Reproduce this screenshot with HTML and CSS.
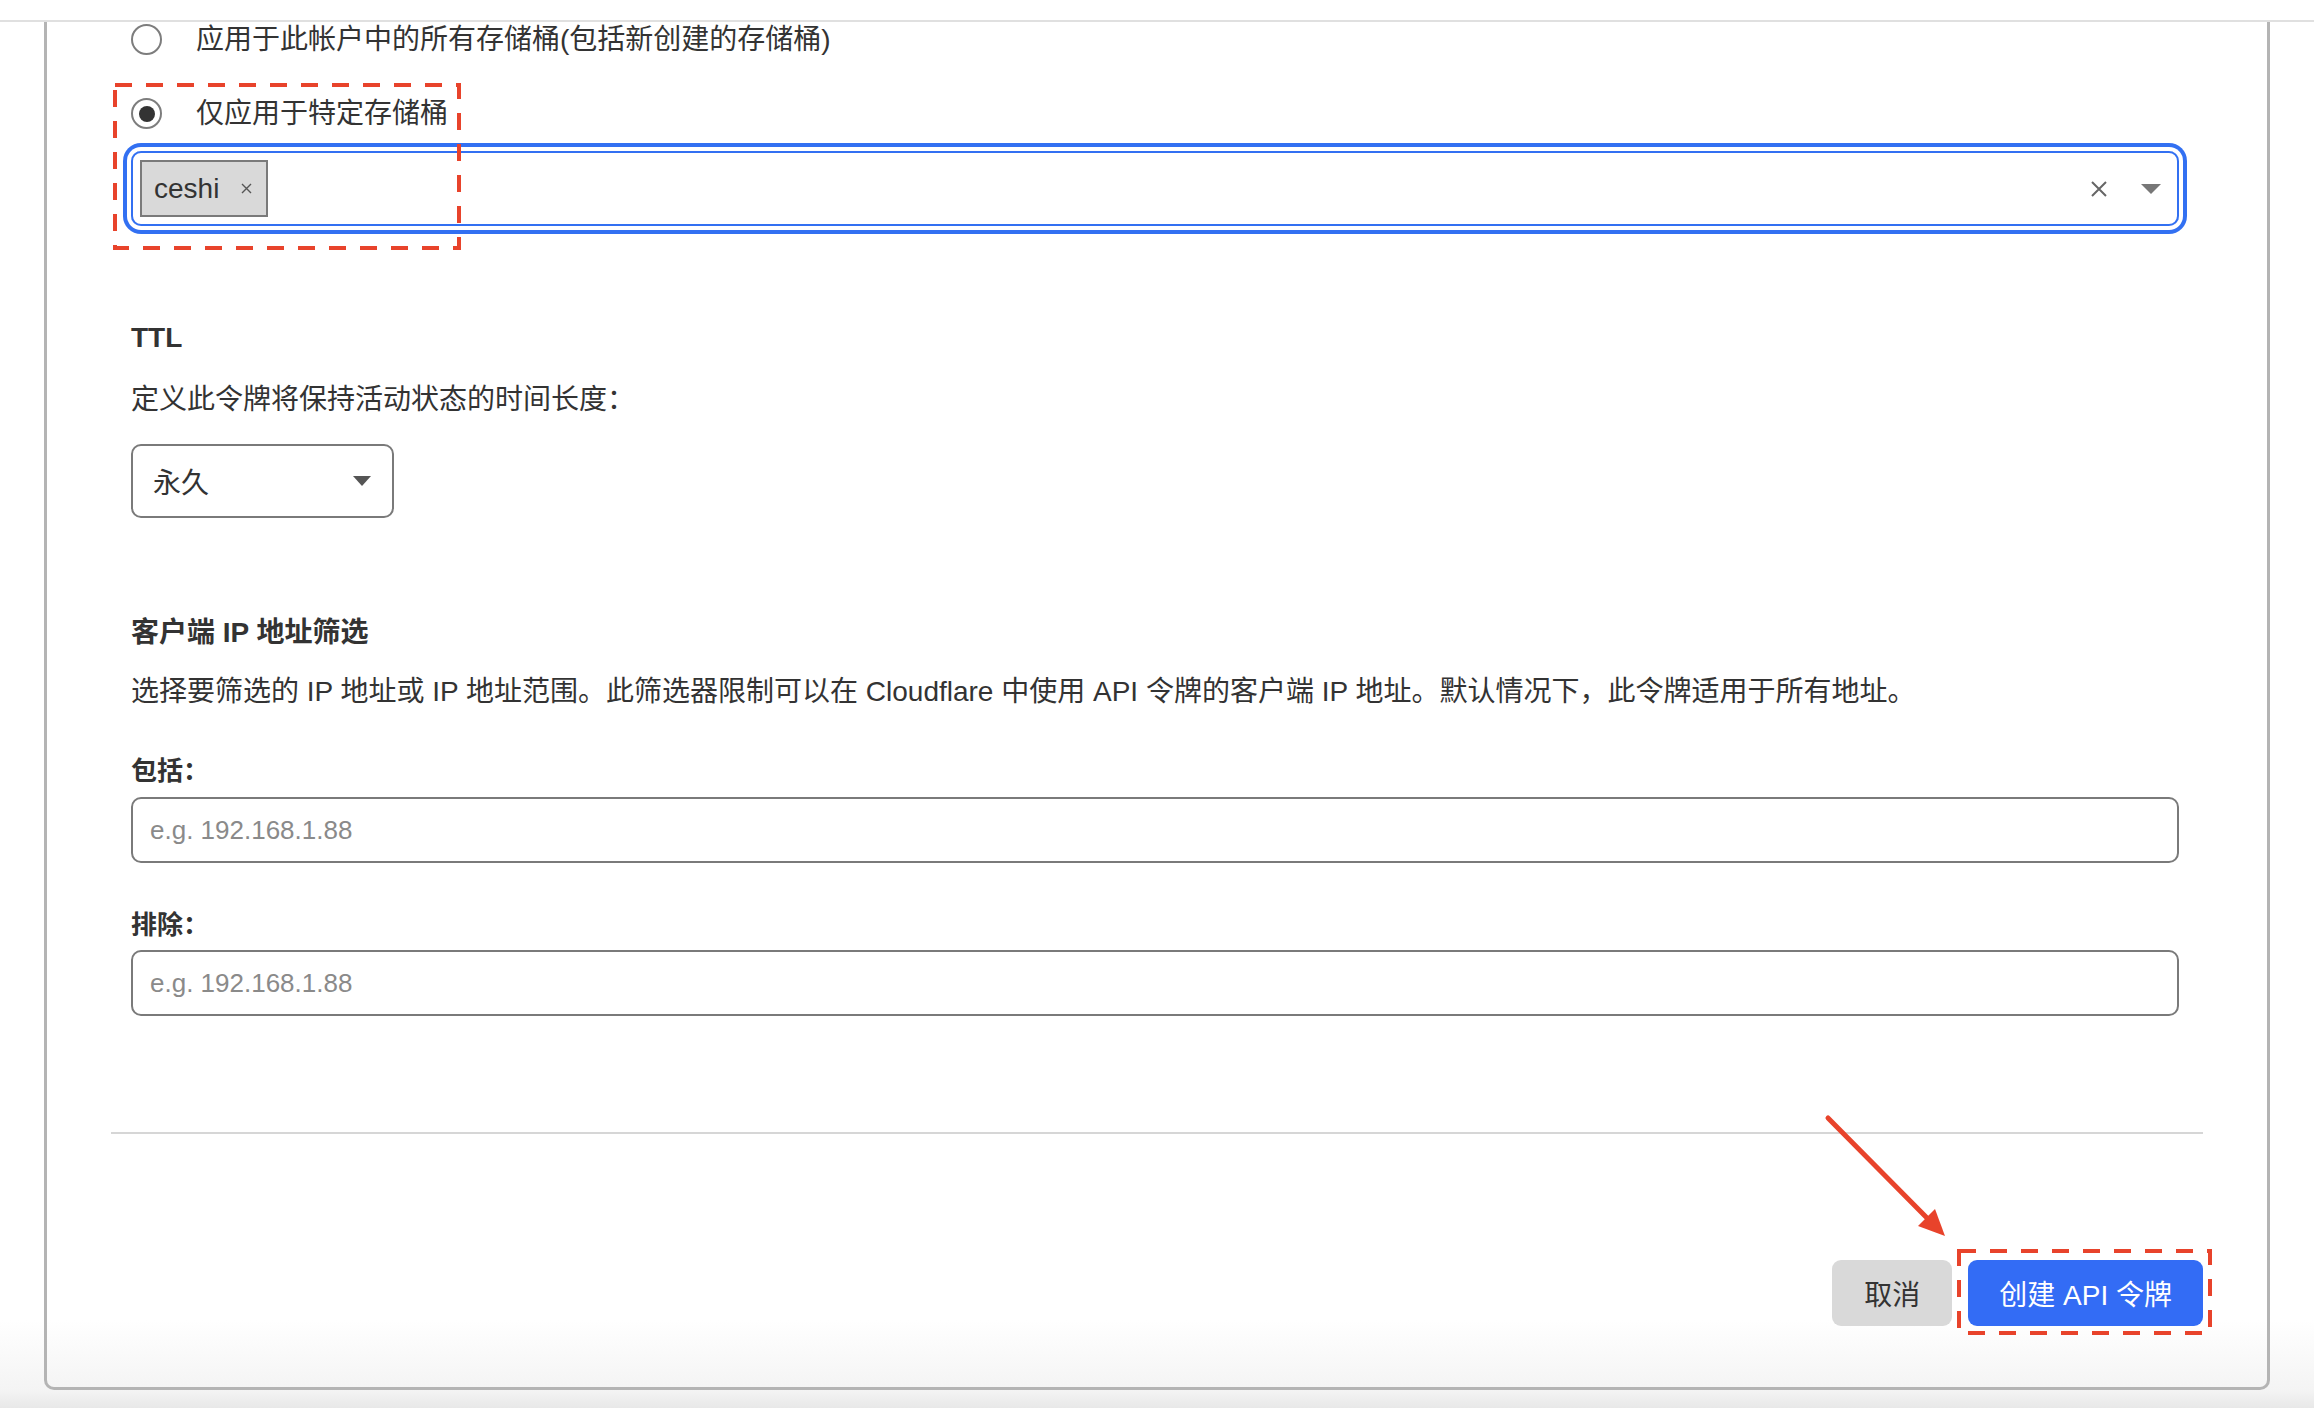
FILE: index.html
```html
<!DOCTYPE html>
<html lang="zh-CN">
<head>
    <meta charset="utf-8">
    <title>创建 API 令牌</title>
    <link rel="stylesheet" href="styles.css">
</head>
<body>
    <div class="topbar"></div>
    <div class="card">
        <div class="form">
            <label class="radio-row">
                <span class="radio"></span>
                <span>应用于此帐户中的所有存储桶(包括新创建的存储桶)</span>
            </label>
            <label class="radio-row radio-second">
                <span class="radio checked"></span>
                <span>仅应用于特定存储桶</span>
            </label>
            <div class="multi-select">
                <span class="tag">ceshi
                    <svg class="tag-x" width="11" height="11" viewBox="0 0 11 11"><path d="M1 1L10 10M10 1L1 10" stroke="#555" stroke-width="1.4"/></svg>
                </span>
                <span class="spacer"></span>
                <svg class="clear-icon" width="16" height="16" viewBox="0 0 16 16"><path d="M1 1L15 15M15 1L1 15" stroke="#666" stroke-width="2"/></svg>
                <svg class="caret" width="20" height="10" viewBox="0 0 20 10"><path d="M0 0H20L10 10Z" fill="#777"/></svg>
            </div>

            <h3 class="section-title">TTL</h3>
            <p class="section-desc">定义此令牌将保持活动状态的时间长度：</p>
            <div class="select-box">
                <span>永久</span>
                <svg width="18" height="10" viewBox="0 0 18 10"><path d="M0 0H18L9 10Z" fill="#555"/></svg>
            </div>

            <h3 class="section-title title-ip">客户端 IP 地址筛选</h3>
            <p class="section-desc desc-ip">选择要筛选的 IP 地址或 IP 地址范围。此筛选器限制可以在 Cloudflare 中使用 API 令牌的客户端 IP 地址。默认情况下，此令牌适用于所有地址。</p>
            <label class="field-label">包括：</label>
            <input class="text-input" type="text" placeholder="e.g. 192.168.1.88">
            <label class="field-label label-exclude">排除：</label>
            <input class="text-input input-exclude" type="text" placeholder="e.g. 192.168.1.88">
        </div>

        <div class="footer">
            <hr class="divider">
            <div class="actions">
                <button class="btn btn-cancel">取消</button>
                <span class="btn-wrap">
                    <button class="btn btn-primary">创建 API 令牌</button>
                    <svg class="mark mark-btn" width="255" height="86" viewBox="0 0 255 86"><rect x="2" y="2" width="251" height="82" fill="none" stroke="#e8432b" stroke-width="4" stroke-dasharray="17 14"/></svg>
                </span>
            </div>
        </div>

        <!-- annotations -->
        <svg class="mark mark-scope" width="348" height="167" viewBox="0 0 348 167"><rect x="2" y="2" width="344" height="163" fill="none" stroke="#e8432b" stroke-width="4" stroke-dasharray="17 14"/></svg>
        <svg class="mark arrow" width="130" height="130" viewBox="0 0 130 130">
            <path d="M5 5L106 107" stroke="#e8432b" stroke-width="5" stroke-linecap="round"/>
            <path d="M122 123L95 113L112 96Z" fill="#e8432b"/>
        </svg>
    </div>
</body>
</html>
```

FILE: styles.css
```css
* {
    box-sizing: border-box;
}
html, body {
    margin: 0;
}
body {
    height: 1408px;
    overflow: hidden;
    font-family: "Liberation Sans", "Noto Sans CJK SC", sans-serif;
    font-size: 28px;
    color: #333;
    background: linear-gradient(to bottom, #fff 1320px, #f4f4f4 1390px, #e8e8e8 1408px);
}
.topbar {
    height: 22px;
    border-bottom: 2px solid #e0e0e0;
}
.card {
    position: relative;
    margin: 0 44px;
    border: 3px solid #b4b4b4;
    border-top: none;
    border-radius: 0 0 10px 10px;
}
.form {
    padding: 0 88px 0 84px;
}

/* scope radios */
.radio-row {
    display: flex;
    align-items: center;
    gap: 34px;
    height: 35px;
    line-height: 40px;
}
.radio-second {
    margin-top: 39px;
}
.radio {
    flex: none;
    display: flex;
    align-items: center;
    justify-content: center;
    width: 31px;
    height: 31px;
    border: 2px solid #7d7d7d;
    border-radius: 50%;
}
.radio.checked::after {
    content: "";
    width: 16px;
    height: 16px;
    border-radius: 50%;
    background: #333;
}
.multi-select {
    display: flex;
    align-items: center;
    height: 75px;
    margin-top: 20px;
    padding: 0 16px 0 7px;
    border: 2px solid #3270f2;
    border-radius: 10px;
    box-shadow: 0 0 0 4px #fff, 0 0 0 8px #3270f2;
}
.tag {
    display: flex;
    align-items: center;
    gap: 22px;
    height: 57px;
    padding: 0 14px 0 12px;
    border: 2px solid #7a7a7a;
    background: #d9d9d9;
}
.spacer {
    flex: 1;
}
.clear-icon {
    margin-right: 34px;
}

/* sections */
.section-title {
    height: 40px;
    margin: 92px 0 0;
    line-height: 40px;
    font-size: 28px;
    font-weight: bold;
}
.title-ip {
    margin-top: 95px;
}
.section-desc {
    height: 40px;
    margin: 22px 0 0;
    line-height: 40px;
}
.desc-ip {
    margin-top: 19px;
}
.select-box {
    display: flex;
    align-items: center;
    justify-content: space-between;
    width: 263px;
    height: 74px;
    margin-top: 24px;
    padding: 0 21px 0 20px;
    border: 2px solid #7a7a7a;
    border-radius: 10px;
}
.field-label {
    display: block;
    height: 40px;
    margin-top: 39px;
    line-height: 40px;
    font-size: 26px;
    font-weight: bold;
}
.label-exclude {
    margin-top: 42px;
}
.text-input {
    display: block;
    width: 100%;
    height: 66px;
    margin-top: 6px;
    padding: 0 17px;
    border: 2px solid #7a7a7a;
    border-radius: 10px;
    font-family: "Liberation Sans", sans-serif;
    font-size: 26px;
    color: #333;
    outline: none;
}
.input-exclude {
    margin-top: 5px;
}
.text-input::placeholder {
    color: #8a8a8a;
}

/* footer */
.footer {
    padding: 116px 64px 61px;
}
.divider {
    height: 2px;
    margin: 0;
    border: none;
    background: #d6d6d6;
}
.actions {
    display: flex;
    justify-content: flex-end;
    gap: 16px;
    margin-top: 126px;
}
.btn {
    height: 66px;
    padding: 0 32px;
    border: none;
    border-radius: 9px;
    font-family: "Liberation Sans", "Noto Sans CJK SC", sans-serif;
    font-size: 28px;
}
.btn-cancel {
    background: #d9d9d9;
    color: #333;
}
.btn-primary {
    padding: 0 31px;
    background: #336cf5;
    color: #fff;
}
.btn-wrap {
    position: relative;
    display: flex;
}

/* red annotations drawn over the form */
.mark {
    position: absolute;
    pointer-events: none;
}
.mark-btn {
    left: -11px;
    top: -11px;
}
.mark-scope {
    left: 66px;
    top: 61px;
}
.arrow {
    left: 1776px;
    top: 1091px;
}
```
